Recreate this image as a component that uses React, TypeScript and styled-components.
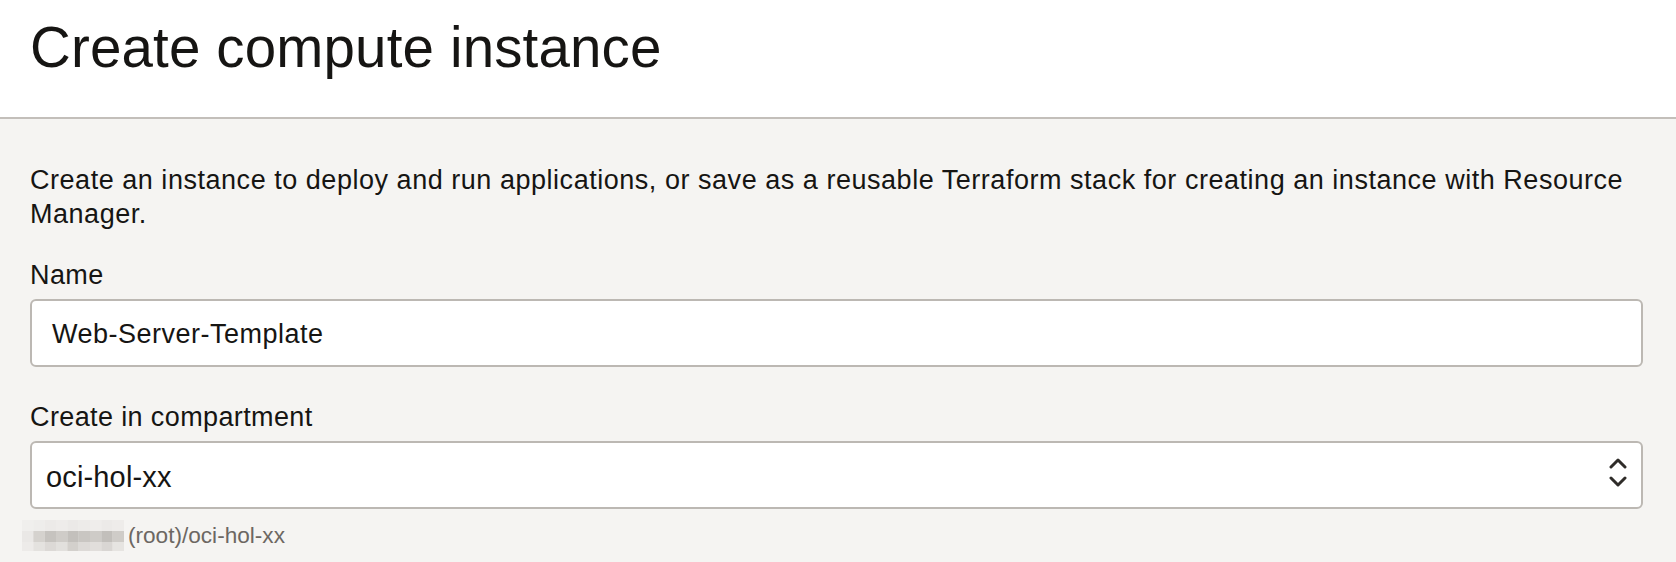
import React from "react";
import styled, { createGlobalStyle } from "styled-components";

const GlobalStyle = createGlobalStyle`
  html, body {
    margin: 0;
    padding: 0;
    background: #f5f4f2;
  }
  body {
    font-family: "Liberation Sans", Arial, Helvetica, sans-serif;
    color: #161513;
  }
  * { box-sizing: border-box; }
`;

const Page = styled.div`
  width: 1676px;
  min-height: 562px;
  background: #f5f4f2;
  overflow: hidden;
`;

const Header = styled.header`
  height: 119px;
  padding: 20px 30px 0 30px;
  background: #ffffff;
  border-bottom: 2px solid #c3bfba;
`;

const Title = styled.h1`
  margin: 0;
  font-size: 56.5px;
  line-height: 56.5px;
  font-weight: 400;
  letter-spacing: 0.15px;
  color: #161513;
`;

const Main = styled.main`
  padding: 44px 33px 0 30px;
  display: flex;
  flex-direction: column;
`;

const Description = styled.p`
  margin: 0;
  font-size: 27px;
  line-height: 34px;
  letter-spacing: 0.53px;
`;

const Label = styled.label<{ $gap: number }>`
  display: block;
  margin-top: ${(p) => p.$gap}px;
  font-size: 27px;
  line-height: 34px;
  letter-spacing: 0.38px;
`;

const Field = styled.div<{ $padLeft: number; $padTop: number; $size: number; $spacing: number }>`
  margin-top: 7px;
  height: 68px;
  display: flex;
  align-items: flex-start;
  justify-content: space-between;
  padding: ${(p) => p.$padTop}px 14px 0 ${(p) => p.$padLeft}px;
  background: #ffffff;
  border: 2px solid #bcb8b3;
  border-radius: 6px;
  font-size: ${(p) => p.$size}px;
  line-height: 30px;
  letter-spacing: ${(p) => p.$spacing}px;
  color: #161513;
`;

const Chevrons = styled.svg`
  margin-top: -4px;
  flex: none;
`;

const HelpRow = styled.div`
  margin-top: 11px;
  display: flex;
  align-items: flex-start;
  gap: 4px;
  margin-left: -8px;
`;

const HelpText = styled.span`
  font-size: 22.6px;
  line-height: 31px;
  color: #6c6762;
`;

const mosaic: string[][] = [
  ["#f0efed", "#eeedeb", "#eceae8", "#eeecea", "#ebe9e7", "#edebe9", "#efedeb", "#eceae8", "#eeecea"],
  ["#eae8e6", "#d5d2ce", "#c6c3bf", "#cfccc8", "#c3c0bc", "#c9c6c2", "#cecbc7", "#c2bfbb", "#cfccc8"],
  ["#edebe9", "#e4e2df", "#dcd9d6", "#e2e0dd", "#d3d0cc", "#dddad7", "#e1dedb", "#d9d6d3", "#e6e4e1"],
];

function Redacted() {
  return (
    <svg width="102" height="31" viewBox="0 0 102 31" aria-hidden="true">
      {mosaic.map((row, r) =>
        row.map((c, i) => (
          <rect
            key={`${r}-${i}`}
            x={i * 11.33}
            y={r === 0 ? 0 : r === 1 ? 11 : 22}
            width={11.4}
            height={r === 2 ? 9 : 11}
            fill={c}
          />
        ))
      )}
    </svg>
  );
}

export default function App() {
  return (
    <>
      <GlobalStyle />
      <Page>
        <Header>
          <Title>Create compute instance</Title>
        </Header>
        <Main>
          <Description>
            Create an instance to deploy and run applications, or save as a reusable Terraform stack for
            creating an instance with Resource Manager.
          </Description>

          <Label $gap={27}>Name</Label>
          <Field $padLeft={20} $padTop={18} $size={27} $spacing={0.5}>
            <span>Web-Server-Template</span>
          </Field>

          <Label $gap={33}>Create in compartment</Label>
          <Field $padLeft={14} $padTop={19} $size={29} $spacing={0.15}>
            <span>oci-hol-xx</span>
            <Chevrons width="18" height="30" viewBox="0 0 18 30" aria-hidden="true">
              <polyline points="2,9 9,2 16,9" fill="none" stroke="#2f2c29" strokeWidth="3" strokeLinecap="round" strokeLinejoin="round" />
              <polyline points="2,20 9,27 16,20" fill="none" stroke="#2f2c29" strokeWidth="3" strokeLinecap="round" strokeLinejoin="round" />
            </Chevrons>
          </Field>

          <HelpRow>
            <Redacted />
            <HelpText>(root)/oci-hol-xx</HelpText>
          </HelpRow>
        </Main>
      </Page>
    </>
  );
}
